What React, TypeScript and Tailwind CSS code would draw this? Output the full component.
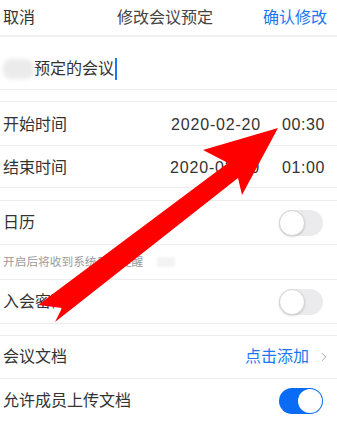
import { ChevronRight } from "lucide-react";

const font = { fontFamily: '"Liberation Sans", "Noto Sans CJK SC", sans-serif' };

function Toggle({ on }: { on?: boolean }) {
  return on ? (
    <div className="w-[44px] h-[26px] rounded-full bg-[#0a6cf4] flex items-center justify-end pr-[1px]">
      <div className="w-[24px] h-[24px] rounded-full bg-white" />
    </div>
  ) : (
    <div className="w-[44px] h-[26px] rounded-full bg-[#ebebed] flex items-center">
      <div className="w-[26px] h-[26px] rounded-full bg-white border border-[#d4d4d4] shadow-[0_1px_2px_rgba(0,0,0,0.15)]" />
    </div>
  );
}

export default function App() {
  return (
    <div
      className="relative w-[337px] h-[422px] overflow-hidden bg-white text-[#333] text-[16px] leading-[20px]"
      style={font}
    >
      {/* 顶部导航 */}
      <div className="h-[35px] grid grid-cols-[1fr_auto_1fr] items-center pl-[3px] pr-[10px]">
        <span>取消</span>
        <span className="text-[#444]">修改会议预定</span>
        <span className="text-right text-[#1c78f2]">确认修改</span>
      </div>
      <div className="h-[2px] bg-[#f1f1f1]" />

      {/* 会议名称 */}
      <div className="h-[53px] pt-[22px] pl-[3px] flex items-start border-b border-[#ededed]">
        <div className="w-[31px] h-[20px] rounded-[8px] bg-[#ebebeb] blur-[2px]" />
        <span>预定的会议</span>
        <span className="ml-[1px] w-[1.5px] h-[22px] -mt-[1px] bg-[#1c78f2]" />
      </div>
      <div className="h-[12px] border-b border-[#ededed]" />

      {/* 时间 */}
      <div className="h-[44px] pt-[3px] flex items-center pl-[3px] pr-[12px] border-b border-[#ededed]">
        <span className="flex-1">开始时间</span>
        <span className="tracking-[0.8px]">2020-02-20</span>
        <span className="ml-[21px] tracking-[0.6px]">00:30</span>
      </div>
      <div className="h-[42px] pt-[2px] flex items-center pl-[3px] pr-[12px] border-b border-[#ededed]">
        <span className="flex-1">结束时间</span>
        <span className="tracking-[0.8px]">2020-02-20</span>
        <span className="ml-[22px] tracking-[0.6px]">01:00</span>
      </div>
      <div className="h-[13px] border-b border-[#ededed]" />

      {/* 日历 */}
      <div className="h-[44px] flex items-center justify-between pl-[3px] pr-[14px] border-b border-[#ededed]">
        <span>日历</span>
        <Toggle />
      </div>
      <div className="h-[35px] flex items-center pl-[3px] border-b border-[#ededed]">
        <span className="text-[11.7px] text-[#9b9b9b]">开启后将收到系统日历提醒</span>
        <span className="ml-[14px] w-[18px] h-[10px] bg-[#f3f3f3] blur-[1px]" />
      </div>

      {/* 入会密码 */}
      <div className="h-[44px] flex items-center justify-between pl-[3px] pr-[14px] border-b border-[#ededed]">
        <span>入会密码</span>
        <Toggle />
      </div>
      <div className="h-[12px] border-b border-[#ededed]" />

      {/* 会议文档 */}
      <div className="h-[43px] flex items-center pl-[3px] pr-[6px] border-b border-[#ededed]">
        <span className="flex-1">会议文档</span>
        <span className="text-[#1c78f2]">点击添加</span>
        <ChevronRight className="ml-[8px]" size={14} strokeWidth={1.5} color="#9a9a9a" />
      </div>
      <div className="h-[43px] flex items-center justify-between pl-[3px] pr-[14px]">
        <span>允许成员上传文档</span>
        <Toggle on />
      </div>

      {/* 红色箭头标注 */}
      <svg className="absolute inset-0 pointer-events-none" width="337" height="422" viewBox="0 0 337 422">
        <polygon
          points="278,128 203,150 228,163 38,305 62,308 55,322 238,178 242,195"
          fill="#ff0000"
        />
      </svg>
    </div>
  );
}
